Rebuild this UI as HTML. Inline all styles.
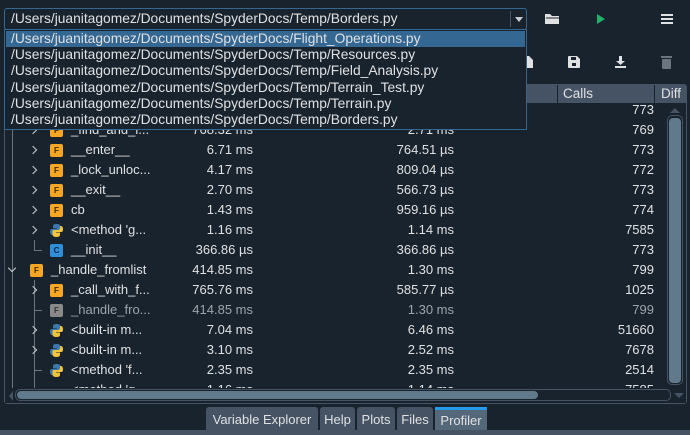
<!DOCTYPE html>
<html><head><meta charset="utf-8"><style>
*{margin:0;padding:0;box-sizing:border-box}
body{width:690px;height:435px;background:#19232d;font-family:"Liberation Sans",sans-serif;font-size:13px;color:#e0e1e3;position:relative;overflow:hidden}
.a{position:absolute;white-space:nowrap}
.row{position:absolute;left:0;width:668px;height:20px;line-height:20px}
.r{position:absolute;text-align:right}
.ic{position:absolute;width:13px;height:13px;border-radius:2px;font-size:8px;font-weight:bold;line-height:13px;text-align:center;color:#3a2a00}
.F{background:#f5a623}
.C{background:#2f8fd8;color:#0b2740}
.G{background:#8a8a8a;color:#333}
.chev{position:absolute;width:6px;height:6px;border-right:1.5px solid #c9cdd1;border-top:1.5px solid #c9cdd1;transform:rotate(45deg)}
</style></head><body>
<!-- combobox -->
<div class="a" style="left:4px;top:8px;width:523px;height:22px;border:1px solid #346792;border-radius:3px;background:#19232d"></div>
<div class="a" style="left:11px;top:10px;line-height:18px;font-size:13.8px">/Users/juanitagomez/Documents/SpyderDocs/Temp/Borders.py</div>
<div class="a" style="left:515px;top:17px;width:0;height:0;border-left:4px solid transparent;border-right:4px solid transparent;border-top:5px solid #c9cdd1"></div>
<div class="a" style="left:510px;top:11px;width:1px;height:16px;background:#455364"></div>
<!-- toolbar icons -->
<svg class="a" style="left:545px;top:13px" width="15" height="12"><path d="M0 1h5l2 2h7v8H0z" fill="#e0e1e3"/><path d="M1 5h13" stroke="#19232d" stroke-width="1"/></svg>
<svg class="a" style="left:597px;top:14px" width="8" height="10"><path d="M0 0L8 5L0 10z" fill="#1fb26b"/></svg>
<svg class="a" style="left:661px;top:14px" width="12" height="10"><path d="M0 1h12M0 5h12M0 9h12" stroke="#e0e1e3" stroke-width="2"/></svg>
<svg class="a" style="left:568px;top:56px" width="12" height="12"><path d="M0 1a1 1 0 0 1 1-1h8l3 3v8a1 1 0 0 1-1 1H1a1 1 0 0 1-1-1z" fill="#e0e1e3"/><rect x="3" y="1" width="5" height="3" fill="#19232d"/><rect x="4" y="7" width="4" height="3" fill="#19232d"/></svg>
<svg class="a" style="left:615px;top:56px" width="11" height="12"><path d="M4 0h3v5h3L5.5 9 1 5h3z" fill="#e0e1e3"/><rect x="0" y="10" width="11" height="2" fill="#e0e1e3"/></svg>
<svg class="a" style="left:661px;top:55px" width="11" height="14"><rect x="0" y="1" width="11" height="2" fill="#6b7580"/><rect x="1" y="4" width="9" height="10" rx="1" fill="#6b7580"/></svg>
<svg class="a" style="left:523px;top:56px" width="10" height="12"><path d="M0 0h6l4 4v8H0z" fill="#e0e1e3"/></svg>
<!-- table frame -->
<div class="a" style="left:4px;top:84px;width:683px;height:320px;border:1px solid #455364;border-radius:3px"></div>
<div class="a" style="left:5px;top:85px;width:681px;height:18px;background:#455364"></div>
<div class="a" style="left:557px;top:85px;width:1px;height:18px;background:#19232d"></div>
<div class="a" style="left:654px;top:85px;width:1px;height:18px;background:#19232d"></div>
<div class="a" style="left:563px;top:85px;line-height:18px;font-size:13.5px">Calls</div>
<div class="a" style="left:661px;top:85px;line-height:18px;font-size:13.5px">Diff</div>
<!-- tree lines -->
<div class="a" style="left:12px;top:100px;width:1px;height:290px;background:#6b7580"></div>
<div class="a" style="left:34px;top:240px;width:1px;height:10px;background:#6b7580"></div>
<div class="a" style="left:34px;top:250px;width:8px;height:1px;background:#6b7580"></div>
<div class="a" style="left:34px;top:280px;width:1px;height:110px;background:#6b7580"></div>
<div class="a" style="left:34px;top:310px;width:8px;height:1px;background:#6b7580"></div>
<div class="a" style="left:34px;top:370px;width:8px;height:1px;background:#6b7580"></div>

<div class="row" style="top:100px"><span class="r" style="right:14px">773</span></div>
<div class="row" style="top:120px"><span class="chev" style="left:30px;top:7px"></span><span class="ic F" style="left:50px;top:4px">F</span><span class="a" style="left:71px">_find_and_l...</span><span class="r" style="left:150px;width:103px">768.32 ms</span><span class="r" style="left:350px;width:104px">2.71 ms</span><span class="r" style="right:14px">769</span></div>
<div class="row" style="top:140px"><span class="chev" style="left:30px;top:7px"></span><span class="ic F" style="left:50px;top:4px">F</span><span class="a" style="left:71px">__enter__</span><span class="r" style="left:150px;width:103px">6.71 ms</span><span class="r" style="left:350px;width:104px">764.51 µs</span><span class="r" style="right:14px">773</span></div>
<div class="row" style="top:160px"><span class="chev" style="left:30px;top:7px"></span><span class="ic F" style="left:50px;top:4px">F</span><span class="a" style="left:71px">_lock_unloc...</span><span class="r" style="left:150px;width:103px">4.17 ms</span><span class="r" style="left:350px;width:104px">809.04 µs</span><span class="r" style="right:14px">772</span></div>
<div class="row" style="top:180px"><span class="chev" style="left:30px;top:7px"></span><span class="ic F" style="left:50px;top:4px">F</span><span class="a" style="left:71px">__exit__</span><span class="r" style="left:150px;width:103px">2.70 ms</span><span class="r" style="left:350px;width:104px">566.73 µs</span><span class="r" style="right:14px">773</span></div>
<div class="row" style="top:200px"><span class="chev" style="left:30px;top:7px"></span><span class="ic F" style="left:50px;top:4px">F</span><span class="a" style="left:71px">cb</span><span class="r" style="left:150px;width:103px">1.43 ms</span><span class="r" style="left:350px;width:104px">959.16 µs</span><span class="r" style="right:14px">774</span></div>
<div class="row" style="top:220px"><span class="chev" style="left:30px;top:7px"></span><svg class="a" style="left:50px;top:4px" width="13" height="13"><path d="M6.5 0C3 0 3 1.5 3 3v1.5h4V5H1.5C0 5 0 7 0 8s.5 3 2 3H3V9c0-1 1-2 2-2h4c1 0 1.5-.5 1.5-1.5V2.5C10.5 1 9 0 6.5 0z" fill="#3c78b0"/><path d="M6.5 13c3.5 0 3.5-1.5 3.5-3V8.5H6V8h5.5C13 8 13 6 13 5s-.5-3-2-3H10v2c0 1-1 2-2 2H4C3 6 2.5 6.5 2.5 7.5v3C2.5 12 4 13 6.5 13z" fill="#f4c43a"/></svg><span class="a" style="left:71px">&lt;method 'g...</span><span class="r" style="left:150px;width:103px">1.16 ms</span><span class="r" style="left:350px;width:104px">1.14 ms</span><span class="r" style="right:14px">7585</span></div>
<div class="row" style="top:240px"><span class="ic C" style="left:50px;top:4px">C</span><span class="a" style="left:71px">__init__</span><span class="r" style="left:150px;width:103px">366.86 µs</span><span class="r" style="left:350px;width:104px">366.86 µs</span><span class="r" style="right:14px">773</span></div>
<div class="row" style="top:260px"><span class="chev" style="left:9px;top:5px;transform:rotate(135deg)"></span><span class="ic F" style="left:30px;top:4px">F</span><span class="a" style="left:51px">_handle_fromlist</span><span class="r" style="left:150px;width:103px">414.85 ms</span><span class="r" style="left:350px;width:104px">1.30 ms</span><span class="r" style="right:14px">799</span></div>
<div class="row" style="top:280px"><span class="chev" style="left:30px;top:7px"></span><span class="ic F" style="left:50px;top:4px">F</span><span class="a" style="left:71px">_call_with_f...</span><span class="r" style="left:150px;width:103px">765.76 ms</span><span class="r" style="left:350px;width:104px">585.77 µs</span><span class="r" style="right:14px">1025</span></div>
<div class="row" style="top:300px;color:#9da4ab"><span class="ic G" style="left:50px;top:4px">F</span><span class="a" style="left:71px">_handle_fro...</span><span class="r" style="left:150px;width:103px">414.85 ms</span><span class="r" style="left:350px;width:104px">1.30 ms</span><span class="r" style="right:14px">799</span></div>
<div class="row" style="top:320px"><span class="chev" style="left:30px;top:7px"></span><svg class="a" style="left:50px;top:4px" width="13" height="13"><path d="M6.5 0C3 0 3 1.5 3 3v1.5h4V5H1.5C0 5 0 7 0 8s.5 3 2 3H3V9c0-1 1-2 2-2h4c1 0 1.5-.5 1.5-1.5V2.5C10.5 1 9 0 6.5 0z" fill="#3c78b0"/><path d="M6.5 13c3.5 0 3.5-1.5 3.5-3V8.5H6V8h5.5C13 8 13 6 13 5s-.5-3-2-3H10v2c0 1-1 2-2 2H4C3 6 2.5 6.5 2.5 7.5v3C2.5 12 4 13 6.5 13z" fill="#f4c43a"/></svg><span class="a" style="left:71px">&lt;built-in m...</span><span class="r" style="left:150px;width:103px">7.04 ms</span><span class="r" style="left:350px;width:104px">6.46 ms</span><span class="r" style="right:14px">51660</span></div>
<div class="row" style="top:340px"><span class="chev" style="left:30px;top:7px"></span><svg class="a" style="left:50px;top:4px" width="13" height="13"><path d="M6.5 0C3 0 3 1.5 3 3v1.5h4V5H1.5C0 5 0 7 0 8s.5 3 2 3H3V9c0-1 1-2 2-2h4c1 0 1.5-.5 1.5-1.5V2.5C10.5 1 9 0 6.5 0z" fill="#3c78b0"/><path d="M6.5 13c3.5 0 3.5-1.5 3.5-3V8.5H6V8h5.5C13 8 13 6 13 5s-.5-3-2-3H10v2c0 1-1 2-2 2H4C3 6 2.5 6.5 2.5 7.5v3C2.5 12 4 13 6.5 13z" fill="#f4c43a"/></svg><span class="a" style="left:71px">&lt;built-in m...</span><span class="r" style="left:150px;width:103px">3.10 ms</span><span class="r" style="left:350px;width:104px">2.52 ms</span><span class="r" style="right:14px">7678</span></div>
<div class="row" style="top:360px"><svg class="a" style="left:50px;top:4px" width="13" height="13"><path d="M6.5 0C3 0 3 1.5 3 3v1.5h4V5H1.5C0 5 0 7 0 8s.5 3 2 3H3V9c0-1 1-2 2-2h4c1 0 1.5-.5 1.5-1.5V2.5C10.5 1 9 0 6.5 0z" fill="#3c78b0"/><path d="M6.5 13c3.5 0 3.5-1.5 3.5-3V8.5H6V8h5.5C13 8 13 6 13 5s-.5-3-2-3H10v2c0 1-1 2-2 2H4C3 6 2.5 6.5 2.5 7.5v3C2.5 12 4 13 6.5 13z" fill="#f4c43a"/></svg><span class="a" style="left:71px">&lt;method 'f...</span><span class="r" style="left:150px;width:103px">2.35 ms</span><span class="r" style="left:350px;width:104px">2.35 ms</span><span class="r" style="right:14px">2514</span></div>
<div class="row" style="top:380px;height:8px;overflow:hidden"><span class="a" style="left:71px">&lt;method 'g...</span><span class="r" style="left:150px;width:103px">1.16 ms</span><span class="r" style="left:350px;width:104px">1.14 ms</span><span class="r" style="right:14px">7585</span></div>

<!-- scrollbars -->
<div class="a" style="left:5px;top:388px;width:681px;height:15px;background:#19232d"></div>
<div class="a" style="left:667px;top:115px;width:16px;height:270px;border:1px solid #455364;border-radius:5px"></div>
<div class="a" style="left:669px;top:118px;width:12px;height:265px;background:#60798b;border-radius:4px"></div>
<div class="a" style="left:670px;top:108px;width:0;height:0;border-left:5px solid transparent;border-right:5px solid transparent;border-bottom:5px solid #455364"></div>
<div class="a" style="left:15px;top:389px;width:656px;height:12px;border:1px solid #455364;border-radius:5px"></div>
<div class="a" style="left:17px;top:391px;width:521px;height:8px;background:#60798b;border-radius:4px"></div>
<div class="a" style="left:9px;top:391px;width:0;height:0;border-top:5px solid transparent;border-bottom:5px solid transparent;border-right:4px solid #455364"></div>
<div class="a" style="left:674px;top:393px;width:0;height:0;border-left:5px solid transparent;border-right:5px solid transparent;border-top:5px solid #455364"></div>

<!-- popup -->
<div class="a" style="left:4px;top:29px;width:523px;height:101px;background:#19232d;border:1px solid #346792"></div>
<div class="a" style="left:6px;top:31px;width:519px;height:16px;background:#346792"></div>
<div class="a" style="left:11px;top:31px;line-height:16.2px;font-size:13.8px">/Users/juanitagomez/Documents/SpyderDocs/Flight_Operations.py<br>/Users/juanitagomez/Documents/SpyderDocs/Temp/Resources.py<br>/Users/juanitagomez/Documents/SpyderDocs/Temp/Field_Analysis.py<br>/Users/juanitagomez/Documents/SpyderDocs/Temp/Terrain_Test.py<br>/Users/juanitagomez/Documents/SpyderDocs/Temp/Terrain.py<br>/Users/juanitagomez/Documents/SpyderDocs/Temp/Borders.py</div>

<!-- tabs -->
<div class="a" style="left:0;top:430px;width:690px;height:5px;background:#455364"></div>
<div class="a" style="left:206px;top:407px;width:112px;height:23px;background:#455364;border-radius:3px 3px 0 0;line-height:25px;text-align:center">Variable Explorer</div>
<div class="a" style="left:320px;top:407px;width:35px;height:23px;background:#455364;border-radius:3px 3px 0 0;line-height:25px;text-align:center">Help</div>
<div class="a" style="left:357px;top:407px;width:38px;height:23px;background:#455364;border-radius:3px 3px 0 0;line-height:25px;text-align:center">Plots</div>
<div class="a" style="left:397px;top:407px;width:36px;height:23px;background:#455364;border-radius:3px 3px 0 0;line-height:25px;text-align:center">Files</div>
<div class="a" style="left:435px;top:407px;width:52px;height:23px;background:#54687a;border-top:3px solid #259ae9;line-height:21px;text-align:center">Profiler</div>
</body></html>
